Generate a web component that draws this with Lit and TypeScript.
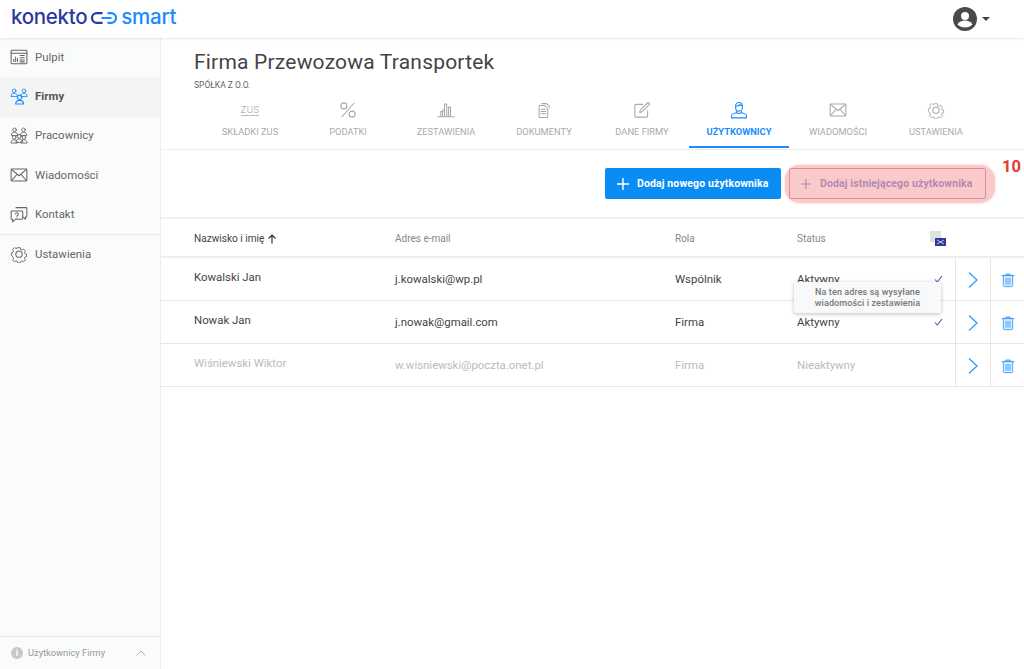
import { LitElement, html, css, svg } from "lit";
import { customElement } from "lit/decorators.js";

const sw = (inner: unknown, size = 20, vb = 24) => html`<svg width=${size} height=${size} viewBox="0 0 ${vb} ${vb}" fill="none" stroke="currentColor" stroke-width="1.4" stroke-linecap="round" stroke-linejoin="round">${inner}</svg>`;

const gear = svg`<path d="M10 2.500h4l.6 2.700 1.900.8 2.400-1.500 2.800 2.800-1.500 2.400.8 1.900 2.500.6v4l-2.500.6-.8 1.900 1.500 2.400-2.800 2.800-2.400-1.500-1.900.8-.6 2.500h-4l-.6-2.500-1.900-.8-2.400 1.500-2.800-2.800 1.500-2.400-.8-1.900L.5 14v-4l2.500-.6.8-1.900-1.500-2.400 2.800-2.800 2.400 1.500 1.900-.8z" transform="translate(1.400 1.400) scale(.88)"/><circle cx="12" cy="12.200" r="4.200"/>`;
const envelope = svg`<rect x="1.500" y="4" width="21" height="16" rx="1.200"/><path d="M2 4.500 12 13l10-8.500M2 19.500l7.500-8.500M22 19.500 14.500 11"/>`;
const pulpit = svg`<rect x="1.500" y="3" width="21" height="18" rx="1.200"/><path d="M1.500 7h21M5 18v-3M7.500 18v-6M10 18v-4M13.500 10h5.500M13.500 13h5.500M13.500 16h5.500M13.500 18.500h5.500"/>`;
const person = (x: number, y: number, s: number) => svg`<g transform="translate(${x} ${y}) scale(${s})"><circle cx="6" cy="3.600" r="2.800"/><path d="M1 12c0-3 2-4.500 5-4.500s5 1.500 5 4.500z"/></g>`;
const firmy = svg`${person(0.5, 2, .85)}${person(13.5, 2, .85)}${person(6.5, 10, 1.05)}`;
const pracownicy = svg`${person(1, 2, .85)}${person(13, 2, .85)}${person(0.5, 12, .85)}${person(7, 10.5, .9)}${person(13.5, 12, .85)}`;
const kontakt = svg`<path d="M8 3.500h13.500a1 1 0 0 1 1 1V15a1 1 0 0 1-1 1h-1v3l-3-3"/><path d="M2.500 8H16a1 1 0 0 1 1 1v9a1 1 0 0 1-1 1H7l-3.500 3.500V19h-1a1 1 0 0 1-1-1V9a1 1 0 0 1 1-1z"/><path d="M7.500 12a1.800 1.800 0 1 1 2.700 1.600c-.7.400-.9.800-.9 1.400M9.300 17v.1"/>`;
const percent = svg`<path d="M20 3 4 21"/><circle cx="6.500" cy="6.500" r="4"/><circle cx="17.500" cy="17.500" r="4"/>`;
const bars = svg`<path d="M1 21h22M5 21v-7h2.500v7M10 21V4h3v17M15.500 21V8H18v13M7.500 21v-9h2.500"/>`;
const docs = svg`<path d="M9 3.500h6.500l3.500 3.500v2"/><path d="M6.500 6H13l4 4v11a1 1 0 0 1-1 1H6.500a1 1 0 0 1-1-1V7a1 1 0 0 1 1-1z"/><path d="M8 11h6.500M8 14h6.500M8 17h6.500"/>`;
const edit = svg`<path d="M19.500 13v7a1.500 1.500 0 0 1-1.500 1.500H4A1.500 1.500 0 0 1 2.500 20V6A1.500 1.500 0 0 1 4 4.500h9"/><path d="M20 1.800l2.300 2.300L12 14.500l-3.200.9.900-3.200z"/>`;
const user = svg`<path d="M7.500 6.500a4.500 4.500 0 0 1 9 0V9a4.500 4.500 0 0 1-9 0z"/><path d="M7.500 6.500c2 .3 5-.2 6-2 .5 1.500 1.500 2 3 2"/><path d="M9 13.500v1.800L3.500 17.500c-1 .5-1.500 1.500-1.500 2.500v2.500h20V20c0-1-.5-2-1.500-2.500L15 15.300v-1.800"/><path d="M9 15.500c1 1.500 5 1.500 6 0"/>`;
const trash = svg`<path d="M3 5.500h18M9 5.500V3h6v2.500M5 5.500v15a1.500 1.500 0 0 0 1.500 1.500h11a1.500 1.500 0 0 0 1.500-1.500v-15z" fill="rgba(61,157,245,.18)"/><path d="M9 9.500v9M12 9.500v9M15 9.500v9"/>`;

const nav = [
  ["Pulpit", pulpit, false, false],
  ["Firmy", firmy, true, false],
  ["Pracownicy", pracownicy, false, false],
  ["Wiadomości", envelope, false, false],
  ["Kontakt", kontakt, false, true],
  ["Ustawienia", gear, false, false],
] as const;

const tabs = [
  ["SKŁADKI ZUS", null, false],
  ["PODATKI", percent, false],
  ["ZESTAWIENIA", bars, false],
  ["DOKUMENTY", docs, false],
  ["DANE FIRMY", edit, false],
  ["UŻYTKOWNICY", user, true],
  ["WIADOMOŚCI", envelope, false],
  ["USTAWIENIA", gear, false],
] as const;

const rows = [
  ["Kowalski Jan", "j.kowalski@wp.pl", "Wspólnik", "Aktywny", true, false],
  ["Nowak Jan", "j.nowak@gmail.com", "Firma", "Aktywny", true, false],
  ["Wiśniewski Wiktor", "w.wisniewski@poczta.onet.pl", "Firma", "Nieaktywny", false, true],
] as const;

@customElement("app-root")
export class AppRoot extends LitElement {
  static styles = css`
    :host { display: flex; flex-direction: column; width: 1024px; height: 669px; overflow: hidden; background: #fff; font-family: Roboto, "Liberation Sans", sans-serif; color: #444; position: relative; }
    .top { height: 38px; flex: none; display: flex; align-items: center; justify-content: space-between; padding: 0 34px 0 11px; background: #fff; box-shadow: 0 1px 2px rgba(0,0,0,.1); position: relative; z-index: 2; }
    .logo { display: flex; align-items: center; font: 500 20.5px Inter, Roboto, sans-serif; letter-spacing: -.3px; color: #2b3a9e; line-height: 1; padding-bottom: 4px; }
    .logo svg { margin: 2px 4px 0 4px; }
    .logo b { font-weight: 500; color: #1a8cff; letter-spacing: -.25px; }
    .acct { display: flex; align-items: center; gap: 5px; color: #4a4a4a; }
    .caret { width: 0; height: 0; border: 4.5px solid transparent; border-top: 4.5px solid #444; border-bottom: 0; }
    .body { flex: 1; display: flex; min-height: 0; }
    aside { width: 160px; flex: none; background: #fafbfb; border-right: 1px solid #eee; display: flex; flex-direction: column; }
    .nav { flex: 1; }
    .item { height: 39.4px; display: flex; align-items: center; gap: 7px; padding: 0 0 2px 10px; font-size: 11.4px; letter-spacing: .03px; color: #666; box-sizing: border-box; }
    .item.on { background: #f4f4f4; font-weight: 700; color: #555; }
    .item.on svg { color: #1a8cff; }
    .item.sep { border-bottom: 1px solid #eaeaea; }
    .item svg { color: #666; flex: none; width: 18px; height: 18px; }
    .foot { height: 31px; border-top: 1px solid #eaeaea; margin-bottom: 1px; display: flex; align-items: center; padding: 0 14px 0 11px; font-size: 9.3px; color: #999; gap: 5px; }
    .foot .i { width: 12px; height: 12px; border-radius: 50%; background: #c8c8c8; color: #fff; font: 700 9px/12px Roboto, sans-serif; text-align: center; }
    .foot span { flex: 1; }
    main { flex: 1; min-width: 0; display: flex; flex-direction: column; position: relative; }
    .head { height: 112px; box-sizing: border-box; padding: 10px 0 0 33px; border-bottom: 1px solid #eee; flex: none; }
    h1 { margin: 0; font-weight: 400; font-size: 21px; line-height: 28px; letter-spacing: .2px; color: #444; }
    .sub { font-size: 8.5px; line-height: 12px; color: #666; margin-top: 3px; }
    .tabs { display: flex; margin: 10px 0 0 7px; }
    .tab { width: 98px; height: 47px; box-sizing: border-box; display: flex; flex-direction: column; align-items: center; font-size: 9.3px; color: #aaa; border-bottom: 2px solid transparent; gap: 7px; }
    .tab svg { display: block; color: #a8a8a8; width: 18px; height: 18px; }
    .ico { height: 18px; display: flex; align-items: center; }
    .zus { font: 300 9.5px/11px Roboto, sans-serif; letter-spacing: .4px; color: #999; border-bottom: 1px solid #bbb; }
    .tab.on { color: #1a8cff; font-weight: 700; border-bottom-color: #1a8cff; width: 100px; margin-left: -2px; }
    .tab.on svg { color: #1a8cff; }
    .actions { height: 69px; flex: none; box-sizing: border-box; border-bottom: 2px solid #f0f0f0; display: flex; justify-content: flex-end; align-items: flex-start; padding: 18px 38px 0 0; gap: 8px; position: relative; }
    .btn { height: 31px; box-sizing: border-box; border-radius: 2px; display: flex; align-items: center; font-size: 10.5px; font-weight: 700; letter-spacing: .12px; gap: 8px; padding: 0 0 0 12px; white-space: nowrap; }
    .btn.p { background: #0a8cf5; color: #fff; width: 176px; }
    .btn.g { color: #98a0e0; width: 197px; border: 1px solid #d3a6b8; padding-left: 10px; }
    .btn svg { width: 12px; height: 12px; flex: none; }
    .hl { position: absolute; left: 624px; top: 15px; width: 210px; height: 38px; border-radius: 15px; background: rgba(240,90,90,.32); box-shadow: 0 0 3px rgba(240,90,90,.3); }
    .num { position: absolute; left: 841px; top: 7px; font-size: 16.5px; font-weight: 700; color: #e53935; line-height: 20px; }
    .row { display: grid; grid-template-columns: 234px 280px 122px 158px 35px 34px; box-sizing: border-box; border-bottom: 1px solid #e6e6e6; }
    .row > div { display: flex; align-items: center; white-space: nowrap; }
    .row > div:first-child { padding-left: 33px; }
    .th { height: 39px; font-size: 10px; color: #888; border-bottom: 2px solid #eee; }
    .th > div { padding-top: 2px; }
    .th > div:first-child { color: #444; font-size: 10.1px; gap: 3px; }
    .tr { height: 43px; font-size: 11.4px; color: #444; }
    .tr > .n { padding-bottom: 5px; }
    .tr.off { color: #bbb; }
    .cell { justify-content: space-between; padding-right: 12px; }
    .act { border-left: 1px solid #e6e6e6; justify-content: center; color: #3d9df5; padding-top: 2px; }
    .act svg { display: block; }
    .check { color: #4a55b0; }
    .mail { display: block; width: 16px; height: 16px; margin: 0 9px 0 auto; }
    .tip { position: absolute; left: 633px; top: 244px; width: 147px; height: 31px; box-sizing: border-box; background: #f8f9fa; border-radius: 2px; box-shadow: 0 1px 4px rgba(0,0,0,.25); font-size: 9px; font-weight: 500; line-height: 10.5px; color: #777; text-align: center; padding-top: 5px; letter-spacing: .1px; }
  `;
  render() {
    return html`
      <div class="top">
        <div class="logo">konekto<svg width="26" height="12" viewBox="0 0 26 12" fill="none" stroke-width="2.2"><path d="M11.500 1.200H5.800a4.800 4.800 0 0 0 0 9.600h5.700" stroke="#2b3a9e"/><path d="M10.500 6h10" stroke="#1a8cff" stroke-width="2"/><path d="M16.500 1.200h3.700a4.800 4.800 0 0 1 0 9.600h-3.700" stroke="#1a8cff"/></svg><b>smart</b></div>
        <div class="acct">
          <svg width="24" height="24" viewBox="0 0 24 24"><circle cx="12" cy="12" r="12" fill="#4a4a4a"/><circle cx="12" cy="9" r="4" fill="#fff"/><path d="M4.500 17.500c1.500-3 4.500-4 7.500-4s6 1 7.500 4c-2 2-4.500 3-7.500 3s-5.500-1-7.500-3z" fill="#fff"/></svg>
          <i class="caret"></i>
        </div>
      </div>
      <div class="body">
        <aside>
          <div class="nav">
            ${nav.map(([t, ic, on, sep]) => html`<div class="item ${on ? "on" : ""} ${sep ? "sep" : ""}">${sw(ic)}${t}</div>`)}
          </div>
          <div class="foot"><i class="i">i</i><span>Użytkownicy Firmy</span>
            <svg width="10" height="6" viewBox="0 0 10 6" fill="none" stroke="#b5b5b5"><path d="M.5 5.500 5 1l4.500 4.500"/></svg>
          </div>
        </aside>
        <main>
          <div class="head">
            <h1>Firma Przewozowa Transportek</h1>
            <div class="sub">SPÓŁKA Z O.O.</div>
            <div class="tabs">
              ${tabs.map(([t, ic, on]) => html`<div class="tab ${on ? "on" : ""}"><div class="ico">${ic ? sw(ic) : html`<span class="zus">ZUS</span>`}</div>${t}</div>`)}
            </div>
          </div>
          <div class="actions">
            <div class="btn p"><svg viewBox="0 0 12 12" stroke="#fff" stroke-width="1.4"><path d="M6 0v12M0 6h12"/></svg>Dodaj nowego użytkownika</div>
            <div class="btn g"><svg viewBox="0 0 12 12" stroke="#98a0e0" stroke-width="1.2"><path d="M6 1v10M1 6h10"/></svg>Dodaj istniejącego użytkownika</div>
            <div class="hl"></div>
            <div class="num">10</div>
          </div>
          <div class="row th">
            <div>Nazwisko i imię <svg width="10" height="10" viewBox="0 0 10 10" fill="none" stroke="#333" stroke-width="1.2"><path d="M5 9.500V1M1.500 4.500 5 1l3.500 3.500"/></svg></div>
            <div>Adres e-mail</div><div>Rola</div><div>Status
              <span class="mail">
                <svg width="16" height="16" viewBox="0 0 16 16"><rect x="0" y="0" width="11" height="11" fill="#e0e0e0"/><rect x="5" y="7" width="11" height="8" rx=".5" fill="#2b3a9e"/><path d="M7 9l7 4M14 9l-7 4" stroke="#fff" stroke-width=".7"/></svg>
              </span>
            </div><div></div><div></div>
          </div>
          ${rows.map(([n, e, r, s, ok, off]) => html`
            <div class="row tr ${off ? "off" : ""}">
              <div class="n">${n}</div><div>${e}</div><div>${r}</div>
              <div class="cell">${s}${ok ? html`<svg class="check" width="9" height="8" viewBox="0 0 9 8" fill="none" stroke="currentColor" stroke-width="1.1"><path d="M1 4.500 3.300 7 8 1"/></svg>` : ""}</div>
              <div class="act"><svg width="12" height="18" viewBox="0 0 12 18" fill="none" stroke="currentColor" stroke-width="1.4"><path d="M2 1.500 10 9l-8 7.500"/></svg></div>
              <div class="act">${sw(trash, 16)}</div>
            </div>`)}
          <div class="tip">Na ten adres są wysyłane<br />wiadomości i zestawienia</div>
        </main>
      </div>
    `;
  }
}
